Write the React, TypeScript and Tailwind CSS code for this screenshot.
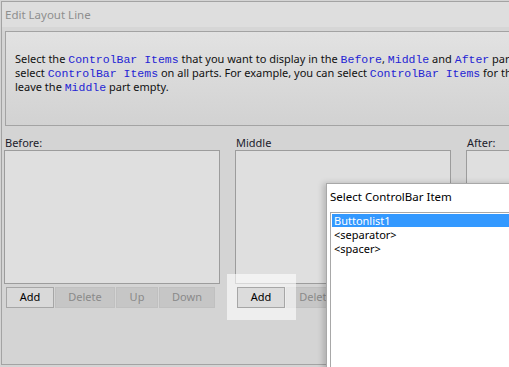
import React from "react";

const M = ({ children }: { children: React.ReactNode }) => (
  <span className="text-[#2424d4] text-[11.5px]" style={{ fontFamily: '"Liberation Mono", monospace' }}>
    {children}
  </span>
);

const Btn = ({ label, w, enabled }: { label: string; w: string; enabled?: boolean }) => (
  <div
    className={
      "h-[21px] flex items-center justify-center border text-[11px] " +
      w +
      (enabled
        ? " bg-[#d9d9d9] border-[#a6a6a6] text-black"
        : " bg-[#c6c6c6] border-[#c0c0c0] text-[#8a8a8a]")
    }
  >
    {label}
  </div>
);

export default function App() {
  return (
    <div
      className="w-[509px] h-[367px] overflow-hidden relative bg-[#d4d4d4]"
      style={{ fontFamily: '"Noto Sans", "Open Sans", sans-serif' }}
    >
      <div className="ml-px mt-px w-[760px] h-[364px] border border-[#a3a3a3] bg-[#d4d4d4] flex flex-col">
        {/* title bar */}
        <div className="h-[25px] bg-[#dedede] pl-[3px] flex items-center text-[11.5px] text-[#8e8e8e] leading-none">
          Edit Layout Line
        </div>
        <div className="h-[4px] bg-[#d6d6d6]" />
        {/* info panel */}
        <div className="ml-[3px] h-[95px] border border-[#a3a3a3] bg-gradient-to-b from-[#e2e2e2] to-[#d2d2d2] pl-[9px] pt-[20px] text-[11px] leading-[14px] text-[#111] whitespace-nowrap">
          <div className="h-[14px]">
            Select the <M>ControlBar Items</M> that you want to display in the <M>Before</M>, <M>Middle</M> and{" "}
            <M>After</M> part of the ControlBar. You can
          </div>
          <div className="h-[14px]">
            select <M>ControlBar Items</M> on all parts. For example, you can select <M>ControlBar Items</M> for the
            Before and After parts and
          </div>
          <div className="h-[14px]">
            leave the <M>Middle</M> part empty.
          </div>
        </div>
        {/* columns */}
        <div className="ml-[2px] mt-[9px] flex gap-[15px]">
          <div className="w-[216px] flex flex-col">
            <div className="h-[15px] pl-px text-[11px] leading-[15px] text-[#1c1c2c]">Before:</div>
            <div className="h-[134px] border border-[#9c9c9c] bg-[#dfdfdf]" />
            <div className="mt-[3px] ml-[2px] flex gap-px">
              <Btn label="Add" w="w-[48px]" enabled />
              <Btn label="Delete" w="w-[60px]" />
              <Btn label="Up" w="w-[42px]" />
              <Btn label="Down" w="w-[56px]" />
            </div>
          </div>
          <div className="w-[216px] flex flex-col">
            <div className="h-[15px] pl-px text-[11px] leading-[15px] text-[#1c1c2c]">Middle</div>
            <div className="h-[134px] border border-[#9c9c9c] bg-[#dfdfdf]" />
            <div className="mt-[3px] ml-[2px] flex gap-px">
              <div className="w-[48px] h-[21px]" />
              <Btn label="Delete" w="w-[60px]" />
              <Btn label="Up" w="w-[42px]" />
              <Btn label="Down" w="w-[56px]" />
            </div>
          </div>
          <div className="w-[216px] flex flex-col">
            <div className="h-[15px] pl-px text-[11px] leading-[15px] text-[#1c1c2c]">After:</div>
            <div className="h-[134px] border border-[#9c9c9c] bg-[#dfdfdf]" />
          </div>
        </div>
      </div>

      {/* highlight around middle Add */}
      <div className="absolute left-[227px] top-[274px] w-[69px] h-[46px] bg-[rgba(255,255,255,0.6)]" />
      <div className="absolute left-[237px] top-[287px] w-[48px] h-[21px] flex items-center justify-center border bg-[#dcdcdc] border-[#a6a6a6] text-[11px] text-black">
        Add
      </div>

      {/* popup */}
      <div className="absolute left-[326px] top-[183px] w-[220px] h-[200px] bg-white border-l border-t border-[#a8a8a8] shadow-[-3px_0_6px_rgba(0,0,0,0.18)]">
        <div className="pl-[3px] pt-[5px] h-[28px] text-[11.5px] leading-[16px] text-black">Select ControlBar Item</div>
        <div className="ml-[3px] h-[200px] border border-[#a8a8a8] pt-px pl-px text-[11px] text-black">
          <div className="h-[13px] mb-px leading-[13px] bg-[#3399ff] text-white pl-[2px]">Buttonlist1</div>
          <div className="h-[14px] leading-[14px] pl-[2px]">&lt;separator&gt;</div>
          <div className="h-[14px] leading-[14px] pl-[2px]">&lt;spacer&gt;</div>
        </div>
      </div>
    </div>
  );
}
